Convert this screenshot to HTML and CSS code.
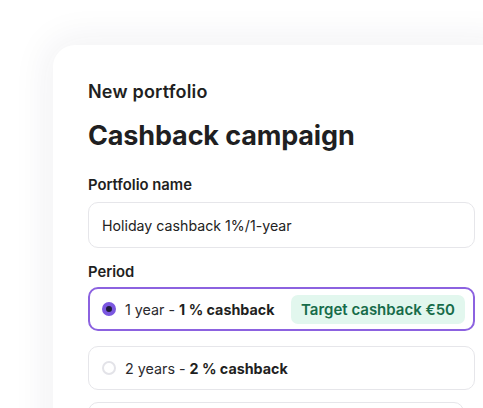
FILE: index.html
```html
<!DOCTYPE html>
<html lang="en">
<head>
<meta charset="utf-8">
<title>New portfolio</title>
<link rel="stylesheet" href="styles.css">
</head>
<body>
<div class="stage">
  <div class="card">
    <div class="eyebrow">New portfolio</div>
    <h1 class="title">Cashback campaign</h1>
    <div class="label">Portfolio name</div>
    <div class="input">Holiday cashback 1%/1-year</div>
    <div class="label period">Period</div>
    <div class="options">
      <div class="option selected">
        <span class="radio on"></span>
        <span class="opt-text">1 year - <b>1 % cashback</b></span>
        <span class="badge">Target cashback €50</span>
      </div>
      <div class="option">
        <span class="radio"></span>
        <span class="opt-text">2 years - <b>2 % cashback</b></span>
      </div>
      <div class="option last"></div>
    </div>
  </div>
</div>
</body>
</html>
```
FILE: styles.css
```css
html, body {
  margin: 0;
  padding: 0;
  background: #ffffff;
  overflow: hidden;
  width: 483px;
  height: 408px;
}
body {
  font-family: Inter, "Noto Sans", sans-serif;
  color: #1f1f22;
}
.stage {
  padding: 45px 0 0 53px;
}
.card {
  width: 387px;
  height: 420px;
  background: #fff;
  border-radius: 22px;
  box-shadow: 0 0 36px 8px rgba(30, 30, 60, 0.06);
  padding: 35px 35px 0 35px;
  box-sizing: content-box;
}
.eyebrow {
  font-size: 18px;
  font-weight: 600;
  line-height: 24px;
  letter-spacing: 0.2px;
}
.title {
  margin: 16px 0 0 0;
  font-size: 27px;
  font-weight: 700;
  line-height: 32px;
  letter-spacing: -0.15px;
}
.label {
  margin-top: 23px;
  font-size: 14.8px;
  font-weight: 600;
  line-height: 20px;
}
.label.period {
  margin-top: 14px;
}
.input {
  margin-top: 7px;
  height: 44px;
  border: 1px solid #e6e6ea;
  border-radius: 10px;
  padding: 0 13px;
  display: flex;
  align-items: center;
  font-size: 14.2px;
  color: #222;
}
.options {
  margin-top: 5px;
  display: flex;
  flex-direction: column;
  gap: 15px;
}
.option {
  height: 42px;
  border: 1px solid #e6e6ea;
  border-radius: 10px;
  padding: 0 8px 0 13px;
  display: flex;
  align-items: center;
  font-size: 14.3px;
  color: #2a2a2e;
}
.option.selected {
  border: 2px solid #8c62e0;
  padding: 0 8px 0 12px;
  height: 40px;
}
.option.last {
  margin-right: 11px;
  margin-top: -3px;
}
.option b {
  font-weight: 700;
  color: #1f1f22;
}
.radio {
  width: 14px;
  height: 14px;
  box-sizing: border-box;
  border-radius: 50%;
  border: 2px solid #e3e3e8;
  margin-right: 9px;
  flex: none;
}
.radio.on {
  border: 4px solid #7b57e0;
  background: #1e1b3a;
}
.opt-text {
  flex: 1;
  white-space: nowrap;
}
.badge {
  background: #e2f7ee;
  color: #176c4a;
  font-weight: 600;
  font-size: 15px;
  border-radius: 7px;
  padding: 0 10px;
  height: 29px;
  display: flex;
  align-items: center;
  white-space: nowrap;
}
```
